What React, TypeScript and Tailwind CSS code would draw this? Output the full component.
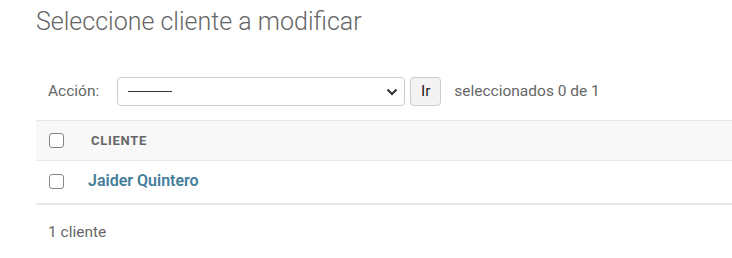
import React from "react";

function Check() {
  return <div className="w-[15px] h-[15px] rounded-[3px] border border-[#858585] bg-white" />;
}

export default function App() {
  return (
    <div className="w-[732px] h-[258px] bg-white overflow-hidden pl-[36px] pt-[7px] font-['Roboto',sans-serif]">
      <h1 className="text-[25px] font-light text-[#666] leading-[30px]">Seleccione cliente a modificar</h1>
      <div className="mt-[40px] flex items-center h-[29px] pl-[12px] text-[15.5px] text-[#666]">
        <span className="text-[#666]">Acción:</span>
        <div className="ml-[18px] w-[288px] h-[29px] border border-[#ccc] rounded-[4px] flex items-center justify-between pl-[10px] pr-[6px]">
          <div className="w-[44px] h-[1px] bg-[#333]" />
          <svg width="12" height="8" viewBox="0 0 12 8" fill="none">
            <path d="M1.5 1.5 L6 6 L10.5 1.5" stroke="#333" strokeWidth="2" />
          </svg>
        </div>
        <div className="ml-[5px] w-[31px] h-[29px] border border-[#ccc] rounded-[4px] bg-[#f3f3f3] flex items-center justify-center text-[#222]">
          Ir
        </div>
        <span className="ml-[13px]">seleccionados 0 de 1</span>
      </div>
      <div className="mt-[14px]">
        <div className="h-[41px] bg-[#f8f8f8] border-t border-b border-[#e8e8e8] flex items-center pl-[13px]">
          <Check />
          <span className="ml-[27px] text-[13px] font-bold text-[#666] tracking-[0.7px]">CLIENTE</span>
        </div>
        <div className="h-[44px] border-b-[2px] border-[#e8e8e8] flex items-center pl-[13px] pb-[2px]">
          <Check />
          <span className="ml-[24px] text-[16px] font-semibold text-[#447e9b]">Jaider Quintero</span>
        </div>
        <div className="pl-[12px] pt-[16px] text-[15.5px] text-[#666]">1 cliente</div>
      </div>
    </div>
  );
}
